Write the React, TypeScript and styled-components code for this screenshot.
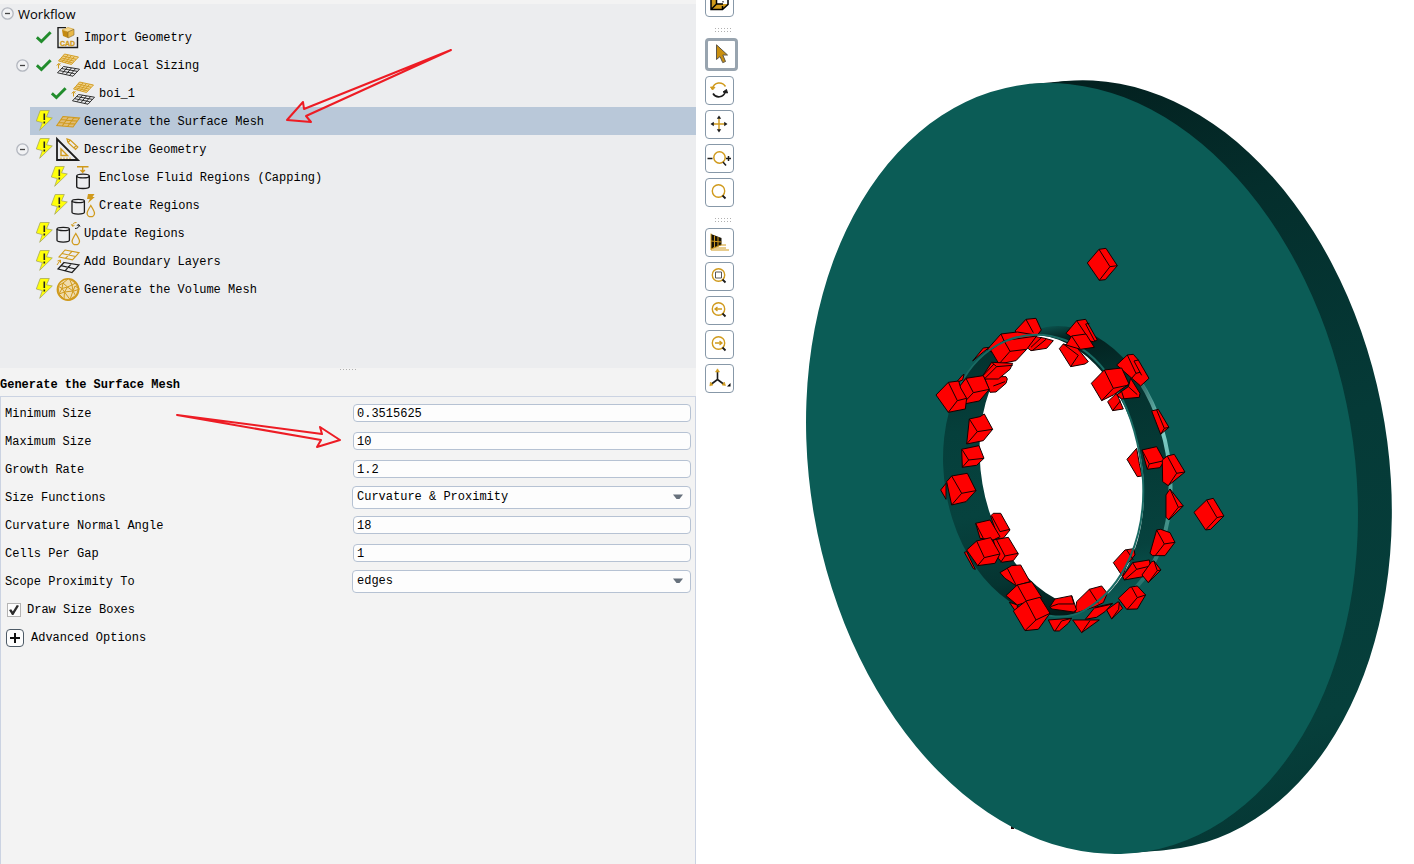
import React, { useState } from "react";
import styled, { createGlobalStyle, css } from "styled-components";

const GOLD = "#d09a1c";
const INK = "#1c1c1c";
const LINE = "#b6c2d3";
const MONO = '"Liberation Mono", "Noto Sans CJK SC", monospace';

const GlobalStyle = createGlobalStyle`
  *, *::before, *::after { box-sizing: border-box; }
  body { margin: 0; background: #fff; color: #000; font: 12px/26px ${MONO}; }
  svg { display: block; flex: none; }
`;

const Page = styled.main`
  display: grid;
  grid-template-columns: minmax(0, 696fr) minmax(0, 718fr);
  height: 100vh;
  overflow: hidden;
`;

const SidePane = styled.div`
  position: relative;
  display: flex;
  flex-direction: column;
  background: #f3f3f3;
  padding-top: 4px;
`;

const Tree = styled.nav`
  flex: none;
  background: #ecedef;
  padding-bottom: 65px;
`;

const TreeRoot = styled.div`
  display: flex;
  align-items: center;
  gap: 4px;
  padding-left: 1px;
  height: 19px;
  font: 13px/20px "Open Sans", sans-serif;
`;

const TreeList = styled.ul`
  list-style: none;
  margin: 0;
  padding: 0;
`;

const TreeRow = styled.li`
  display: flex;
  align-items: center;
  height: 28px;
`;

const ToggleCell = styled.div`
  flex: none;
  width: 30px;
  padding-left: 16px;
`;

const Toggle = styled.button`
  display: block;
  width: 13px;
  height: 13px;
  padding: 0;
  border: 0;
  background: none;
`;

const TreeItem = styled.a<{ $nested?: boolean; $active?: boolean }>`
  display: flex;
  flex: 1;
  align-items: center;
  gap: 4px;
  height: 28px;
  padding-top: 2px;
  padding-left: ${(p) => (p.$nested ? 21 : 6)}px;
  color: inherit;
  text-decoration: none;
  white-space: nowrap;
  background: ${(p) => (p.$active ? "#b9c8d9" : "transparent")};
`;

const Splitter = styled.div`
  display: flex;
  justify-content: center;
  height: 0;
`;

const PanelTitle = styled.h2`
  flex: none;
  margin: 0;
  padding-top: 4px;
  height: 28px;
  font: bold 12px/26px ${MONO};
`;

const Form = styled.form`
  flex: 1;
  border: 1px solid #cbd3e2;
  border-bottom: 0;
  padding: 2px 4px 0;
`;

const Field = styled.div`
  display: grid;
  grid-template-columns: minmax(0, 347fr) minmax(0, 339fr);
  align-items: center;
  height: 28px;
`;

const FieldLabel = styled.label`
  padding-top: 2px;
`;

const controlStyle = css`
  width: 100%;
  border: 1px solid ${LINE};
  border-radius: 4px;
  background: #fdfdfd;
  color: #000;
  font: 12px/16px ${MONO};
  outline: none;
`;

const InputCell = styled.div`
  padding-left: 1px;
`;

const TextInput = styled.input`
  ${controlStyle}
  display: block;
  height: 18px;
  padding: 1px 3px 0;
`;

const SelectCell = styled.div`
  position: relative;
`;

const Select = styled.select`
  ${controlStyle}
  display: block;
  appearance: none;
  height: 23px;
  padding: 0 4px;
`;

const SelectArrow = styled.svg`
  position: absolute;
  right: 8px;
  top: 8px;
  pointer-events: none;
`;

const CheckRow = styled.label`
  display: flex;
  align-items: center;
  gap: 6px;
  height: 28px;
  padding-top: 2px;
  padding-left: 2px;
`;

const Tick = styled.input`
  appearance: none;
  display: grid;
  place-items: center;
  width: 14px;
  height: 14px;
  margin: 0;
  border: 1px solid #b4b4b4;
  background: #fdfdfd;
  &:checked::after {
    content: "";
    width: 10px;
    height: 10px;
    background: #2d2d2d;
    clip-path: polygon(0 50%, 22% 42%, 38% 66%, 78% 0, 100% 8%, 44% 100%, 30% 100%);
  }
`;

const Advanced = styled.button`
  display: flex;
  align-items: center;
  gap: 7px;
  height: 28px;
  padding: 2px 0 0 1px;
  border: 0;
  background: none;
  color: #000;
  font: 12px/26px ${MONO};
`;

const Annotations = styled.svg`
  position: absolute;
  left: 0;
  top: 0;
  pointer-events: none;
`;

const ViewPane = styled.section`
  display: flex;
  min-width: 0;
  min-height: 0;
  background: #fff;
`;

const Toolbar = styled.div`
  display: flex;
  flex: none;
  flex-direction: column;
  gap: 5px;
  width: 48px;
  padding-left: 9px;
  margin-top: -12px;
`;

const ToolButton = styled.button<{ $active?: boolean }>`
  display: grid;
  flex: none;
  place-items: center;
  width: ${(p) => (p.$active ? 33 : 29)}px;
  height: ${(p) => (p.$active ? 33 : 29)}px;
  padding: 0;
  border: ${(p) => (p.$active ? "3px solid #98a4af" : "1px solid #8798a8")};
  border-radius: 4px;
  background: #fff;
`;

const Grip = styled.div`
  flex: none;
  height: 11px;
  padding: 6px 0 0 10px;
`;

const Scene = styled.svg`
  flex: 1;
  min-width: 0;
  width: 100%;
  height: 100%;
`;

function Dots({ rows }: { rows: number }) {
  return (
    <svg width="17" height={rows * 3} fill="#b0b0b0" aria-hidden="true">
      {Array.from({ length: rows * 6 }, (_, i) => (
        <rect key={i} x={(i % 6) * 3} y={Math.floor(i / 6) * 3 + (rows === 1 ? 1 : 0)} width="1" height="1" />
      ))}
    </svg>
  );
}

function Minus() {
  return (
    <svg width="13" height="13" fill="none" aria-hidden="true">
      <circle cx="6.5" cy="6.5" r="5.7" stroke="#b3b7bf" strokeWidth="1.3" fill="#f1f2f4" />
      <path d="M4 6.5h5" stroke="#444" strokeWidth="1.3" />
    </svg>
  );
}

function Status({ done }: { done?: boolean }) {
  return done ? (
    <svg width="16" height="20" fill="none" aria-hidden="true">
      <path d="M.8 9.3 5.4 13.500 14.6 4.3" stroke="#218c2c" strokeWidth="3" />
    </svg>
  ) : (
    <svg width="16" height="20" overflow="visible" aria-hidden="true">
      <path d="M4.200 -1.500H13.300L10.500 4.800 16.300 6 3.700 18.300 6.300 10.600.3 9Z" fill="#ffff0a" stroke="#a9a95a" strokeWidth=".8" />
      <path d="M8.300 1.500v6.500M8.300 9.500v2" stroke="#222" strokeWidth="1.6" />
    </svg>
  );
}

const icons: Record<string, React.ReactNode> = {
  cad: (
    <>
      <path d="M10 1.600H2V21.500H21.500V11" fill="none" stroke={INK} strokeWidth="1.4" />
      <path d="m6 4 6-2.500 6 1.800-6 2.700Z" fill="#f5d890" stroke={GOLD} strokeWidth=".6" />
      <path d="m6 4 6 2v6L7 10Z" fill="#c48a12" />
      <path d="m12 6 6-2.700V9l-6 3Z" fill="#e8b848" stroke="#7d6433" strokeWidth=".6" />
      <text x="4" y="19.500" fontFamily="Liberation Sans" fontSize="7" fontWeight="bold" fill={GOLD} stroke={GOLD} strokeWidth=".3">CAD</text>
    </>
  ),
  sizing: (
    <>
      <path d="m8.500 0 14 3-7 7.500L2.500 7ZM12 1 6 8M15 2 9 9M18.500 2.500 12 9.500M7 2l13 3.300M5 3.800l13 3.300M3.500 5.500l13 3.400" fill="#efd18b" stroke={GOLD} strokeWidth=".9" />
      <path d="m7.500 12.500 16 2.700-6.500 7L1.500 18.800ZM11.500 13.200 6 19.700M15.500 13.900 10 20.500M19.500 14.700 13.500 21.500M5.500 14.500l16 2.900M3.700 16.700l15 3" fill="none" stroke={INK} strokeWidth=".9" />
      <path d="M2.500 14.500v-4l2-1M.8 11.500l1.700-2 1.800 2" fill="none" stroke={GOLD} />
    </>
  ),
  surface: (
    <path d="M7 6.500 23.500 8 17 17 .8 15.500ZM12.500 7 6.200 16M18 7.500 11.600 16.500M5 9.500 21.500 11M3 12.500 19.500 14" fill="#e0bd78" stroke={GOLD} strokeWidth="1.1" />
  ),
  describe: (
    <>
      <path d="M1 1V22H22Z" fill="none" stroke={INK} strokeWidth="1.8" />
      <path d="M5 11V17.500h6.500Z" fill="none" stroke={GOLD} strokeWidth="1.400" />
      <path d="M5 19.500v1.500M8 19.500v1.500M11 19.500v1.500M14 19.500v1.500" stroke={GOLD} />
      <path d="m11 1 1 3.500 7.500 7 2.300-2.500-7.500-7ZM12 4.500l2.300-2.500M18 10l2-2.300" fill="none" stroke={GOLD} strokeWidth="1.200" />
    </>
  ),
  enclose: (
    <>
      <path d="M6 .7h11.500M11.700 .7v5.500M9.500 4l2.200 2.300 2.200-2.300" fill="none" stroke={GOLD} strokeWidth="1.4" />
      <path d="M5.700 10V20.500c0 1.200 2.800 2 6.300 2s6.300-.8 6.300-2V10" fill="none" stroke={INK} strokeWidth="1.4" />
      <ellipse cx="12" cy="10" rx="6.300" ry="1.900" fill="none" stroke={INK} strokeWidth="1.400" />
    </>
  ),
  create: (
    <>
      <path d="M1 7v11.300c0 1.100 2.800 1.800 6.200 1.800s6.200-.7 6.200-1.800V7" fill="none" stroke={INK} strokeWidth="1.3" />
      <ellipse cx="7.200" cy="7" rx="6.200" ry="1.700" fill="none" stroke={INK} strokeWidth="1.3" />
      <path d="m17 0h6.500l-2 3h2.300l-7 6.300 2-4.300H16Z" fill={GOLD} />
      <path d="M19.800 11.500c-2.500 4-3.700 6-3.700 7.700a3.700 3.500 0 0 0 7.400 0c0-1.700-1.200-3.700-3.700-7.700Z" fill="none" stroke={GOLD} strokeWidth="1.3" />
    </>
  ),
  update: (
    <>
      <path d="M1 7v11.300c0 1.100 2.800 1.800 6.200 1.800s6.200-.7 6.200-1.800V7" fill="none" stroke={INK} strokeWidth="1.3" />
      <ellipse cx="7.200" cy="7" rx="6.200" ry="1.700" fill="none" stroke={INK} strokeWidth="1.3" />
      <path d="M16.500 4C16.500 1.500 18 .5 20.500 .5M15.300 2.300l1.200 2 2-1" fill="none" stroke={GOLD} />
      <path d="M23 3C23 5.500 21.500 6.500 19 6.500M24 4.500l-1.200-2-2 1" fill="none" stroke={INK} />
      <path d="M19.800 11.500c-2.500 4-3.700 6-3.700 7.700a3.700 3.500 0 0 0 7.400 0c0-1.700-1.200-3.700-3.700-7.700Z" fill="none" stroke={GOLD} strokeWidth="1.3" />
    </>
  ),
  layers: (
    <>
      <path d="m9 0 14 2.700-6.500 7.200L3 7ZM16 1.400 9.500 8.400M6 3.500l13.500 3" fill="none" stroke={GOLD} strokeWidth="1.1" />
      <path d="m8 12.500 15 2.500-7 7.500L2 19ZM15.500 13.700 9 20.800M5 15.700l14.500 3.300" fill="none" stroke={INK} strokeWidth="1.2" />
      <path d="M1 15 4 10.500M1.500 11 4.500 10v3" fill="none" stroke={GOLD} />
    </>
  ),
  volume: (
    <>
      <circle cx="12" cy="11.500" r="10.700" fill="#f0dcae" stroke={GOLD} strokeWidth="1.400" />
      <path d="m12 1-5 4-5 3 1 8 5 5 6 1 6-4 2.500-7-3-6-6-4 2.500 6-4.500 2L7 5M8 21l.5-7L3 16 6 10.500l5.500-1.500 5.500 4-3 8.500 5.500-4-2.500-4.500 2-5 4.500 3-5.500 2M16 7l3.500-2M6 10.500 7 5M2 8l4 2.500M8.500 14l8.500-1M8.500 14 6 10.500M8.500 14l3-5M8.500 14l5.500 7.500M16 7l1 6" fill="none" stroke={GOLD} strokeWidth="1" />
    </>
  ),
};

type Step = { text: string; icon: string; done?: boolean; nested?: boolean; toggle?: boolean };

const steps: Step[] = [
  { text: "Import Geometry", icon: "cad", done: true },
  { text: "Add Local Sizing", icon: "sizing", done: true, toggle: true },
  { text: "boi_1", icon: "sizing", done: true, nested: true },
  { text: "Generate the Surface Mesh", icon: "surface" },
  { text: "Describe Geometry", icon: "describe", toggle: true },
  { text: "Enclose Fluid Regions (Capping)", icon: "enclose", nested: true },
  { text: "Create Regions", icon: "create", nested: true },
  { text: "Update Regions", icon: "update" },
  { text: "Add Boundary Layers", icon: "layers" },
  { text: "Generate the Volume Mesh", icon: "volume" },
];

type FieldSpec = { id: string; label: string; value: string; options?: string[] };

const fields: FieldSpec[] = [
  { id: "min", label: "Minimum Size", value: "0.3515625" },
  { id: "max", label: "Maximum Size", value: "10" },
  { id: "growth", label: "Growth Rate", value: "1.2" },
  { id: "functions", label: "Size Functions", value: "Curvature & Proximity", options: ["Curvature & Proximity"] },
  { id: "angle", label: "Curvature Normal Angle", value: "18" },
  { id: "cells", label: "Cells Per Gap", value: "1" },
  { id: "scope", label: "Scope Proximity To", value: "edges", options: ["edges"] },
];

const lens = (
  <>
    <circle cx="9.500" cy="9" r="6.200" fill="none" stroke={GOLD} strokeWidth="1.400" />
    <path d="m13.500 13.500 3 3" stroke={INK} strokeWidth="1.8" />
  </>
);

const tools: { name: string; active?: boolean; gripBefore?: boolean; art: React.ReactNode }[] = [
  {
    name: "Display body",
    art: (
      <>
        <path d="M2 17V6l6-4v9Z" fill={GOLD} />
        <path d="m2 17 5.500-5H19l-5 5Z" fill={GOLD} />
        <path d="M7.500 2H19v10H7.500Z" fill="#fff" />
        <path d="M2 5v12.500h11.500L19 12.500V2M7.500 2v10H14M2 17.500 7.500 12M13.500 17.500V14" fill="none" stroke="#000" strokeWidth="1.500" />
        <path d="M14 3v9" stroke="#000" strokeDasharray="1.500 1.500" />
      </>
    ),
  },
  {
    name: "Select",
    active: true,
    gripBefore: true,
    art: <path d="M5.500.8V15.500L9 12.500 11.700 18.600 14.500 17.500 11.800 11H16.500Z" fill="#c98f10" stroke="#5e574a" strokeWidth="1" />,
  },
  {
    name: "Rotate",
    art: (
      <>
        <path d="M3.500 8.500C5 2 13 1 16.500 6.500" fill="none" stroke={GOLD} strokeWidth="1.500" />
        <path d="m1.500 7 4.500.3L3.500 10Z" fill={GOLD} stroke={GOLD} />
        <path d="M16.500 11.500C14.500 18 7 18.500 4 13.500" fill="none" stroke={INK} strokeWidth="1.600" />
        <path d="m14 12 4.500 1-1-3.500Z" fill={INK} stroke={INK} />
      </>
    ),
  },
  {
    name: "Pan",
    art: (
      <>
        <path d="M10 4v12M4 10h12" stroke={GOLD} strokeWidth="1.400" />
        <path d="m10 1.500 2.200 3.300H7.800ZM10 18.500l2.200-3.300H7.800ZM1.500 10l3.300-2.200v4.400ZM18.500 10l-3.300-2.200v4.400Z" fill={INK} />
      </>
    ),
  },
  {
    name: "Zoom in and out",
    art: (
      <>
        <circle cx="10.500" cy="9.500" r="5.700" fill="none" stroke={GOLD} strokeWidth="1.500" />
        <path d="m14 14 3 3.500M-1.500 10.500h5M17 10.500h5M19.500 8v5" stroke={INK} strokeWidth="1.500" />
      </>
    ),
  },
  { name: "Zoom", art: lens },
  {
    name: "Perspective",
    gripBefore: true,
    art: (
      <>
        <path d="M2 2 12.500 6v7L2 17Z" fill="#171207" />
        <path d="M2 1.500V18h18M2 17 12 13h5M4 16h13M2 9l10.500 1M5.500 3.500v12.500M9 5v9.500" fill="none" stroke={GOLD} strokeWidth="1" />
      </>
    ),
  },
  { name: "Zoom to box", art: <>{lens}<path d="M6.500 6h6v6h-6Z" fill="none" stroke="#555" /></> },
  { name: "Previous view", art: <>{lens}<path d="M13 9H6M8.500 7 6 9l2.500 2" fill="none" stroke={GOLD} strokeWidth="1.300" /></> },
  { name: "Next view", art: <>{lens}<path d="M6 9h7M10.500 7 13 9l-2.500 2" fill="none" stroke={GOLD} strokeWidth="1.300" /></> },
  {
    name: "Axis orientation",
    art: (
      <>
        <path d="M8.500 3v8.500L2.500 16M8.500 11.500l6 4.500" fill="none" stroke={INK} strokeWidth="1.600" />
        <path d="m8.500 .8 2 3.200h-4ZM.8 17.800 1.500 14l2.500 3ZM16.500 17.500 13 17l2.300-3Z" fill={GOLD} stroke={GOLD} strokeWidth=".6" />
        <path d="M21.500 15v3.500H18Z" fill="#000" />
      </>
    ),
  },
];

/* Each size box is its outline followed by its visible inner edges. */
type Box = [string, string?];

const boxesBehind: Box[] = [
  ["255 303 288 268 318 265 334 300 320 318 270 320", "M288 268 310 308"],
  ["172 358 213 312 262 306 310 314 330 330 222 340 184 366", "M213 312 222 332"],
  ["128 393 160 354 178 352 160 366"],
  ["290 352 318 320 345 325 370 332 350 355 303 362", "M303 352 335 322M308 361 348 328"],
  ["182 360 222 332 320 318 290 358 258 392 207 402", "M222 332 240 364 290 358M240 364 207 402"],
  ["180 487 165 447 205 440 228 440 232 447 228 460 198 486", "M190 468 225 455"],
  ["158 438 185 397 248 400 240 418 205 447 165 447", "M185 397 200 410 248 406M200 410 165 445M192 402 160 436"],
  ["388 356 400 342 440 352 475 395 465 402 422 410", "M400 342 445 376 422 410"],
  ["591 688 620 655 628 700 636 738 622 740"],
  ["550 998 585 960 612 956 615 975 590 1005 578 1040", "M590 960 610 990"],
  ["440 1115 478 1078 515 1068 532 1090 520 1118 495 1130 460 1142 435 1150", "M478 1078 505 1120"],
  ["428 1170 508 1170 455 1208", "M480 1172 455 1208"],
  ["355 1170 425 1165 415 1180 388 1203 372 1203", "M395 1173 375 1203M395 1173 425 1165"],
  ["360 1130 375 1107 425 1097 440 1140 430 1146 365 1137", "M362 1130 385 1122 432 1122M425 1097 432 1122"],
  ["103 967 110 965 136 1018 130 1016"],
  ["32 780 48 760 48 808"],
  ["238 1117 262 1125 262 1152"],
];

const boxesFront: Box[] = [
  ["507 58 528 55 562 107 526 149 508 151 472 99", "M507 58 540 110 562 107M540 110 508 151"],
  ["78 458 98 435 102 433 98 450"],
  ["80 480 108 445 160 437 178 478 148 513 97 523", "M108 445 130 488 178 478M130 488 97 523"],
  ["18 495 55 457 86 453 92 474 110 505 106 537 55 547", "M55 457 82 512 110 505M82 512 55 547"],
  ["118 567 150 560 163 552 188 598 160 632 110 642", "M118 567 142 605 188 598M142 605 110 642"],
  ["95 658 147 647 162 685 140 706 97 712", "M97 660 116 690 162 685M116 690 97 712"],
  ["408 310 440 272 467 268 502 330 490 335 430 325", "M440 272 467 312M467 282 495 335M467 282 478 280"],
  ["408 345 425 318 468 312 493 352 452 358", "M425 318 450 356"],
  ["560 405 592 375 610 373 625 390 657 445 632 468 600 440", "M592 375 618 430 630 427M612 393 625 390M612 393 635 436M618 430 605 445"],
  ["533 515 560 490 580 537 548 542", "M572 512 548 542"],
  ["560 495 595 470 602 445 630 490 628 502 575 507", "M575 485 582 506M595 470 622 494"],
  ["484 460 523 420 575 414 597 462 550 495 515 512", "M523 420 550 475 597 465M550 475 515 512"],
  ["665 543 685 538 717 592 692 613", "M680 540 703 595 717 592M703 595 692 613"],
  ["636 660 680 650 703 692 690 713 652 718", "M636 660 658 702 703 692M658 702 652 718"],
  ["697 690 712 678 733 673 765 726 715 767 698 755", "M712 678 740 730 765 726M740 730 715 767"],
  ["708 795 720 777 760 828 717 870 708 862", "M720 777 745 832 760 828M745 832 717 868"],
  ["792 847 830 810 850 805 882 858 842 898 827 900", "M830 810 861 863 882 858M861 863 827 900"],
  ["680 900 692 898 720 908 735 937 705 977 668 977 660 970", "M680 900 703 942 735 937M703 942 675 978"],
  ["578 1040 608 998 658 990 662 1010 640 1040 583 1050", "M608 998 620 1018 662 1008M620 1018 583 1050"],
  ["636 1035 665 995 672 993 693 1020 655 1058", "M672 993 682 1022 693 1020M682 1022 655 1058"],
  ["565 1105 600 1072 622 1068 647 1095 622 1137 590 1138", "M605 1072 622 1103 647 1095M622 1103 592 1138"],
  ["530 1140 565 1115 578 1135 545 1167", "M568 1116 566 1138 545 1167"],
  ["466 1168 495 1132 548 1120 525 1145 500 1162", "M495 1134 548 1122"],
  ["182 858 190 850 212 850 240 900 220 925 205 925", "M185 858 210 905 240 898"],
  ["137 880 180 870 210 920 190 930 150 925", "M137 880 160 925"],
  ["190 930 235 922 265 972 250 992 215 997 205 985", "M200 930 225 978 265 970M225 978 212 997"],
  ["110 960 140 933 182 923 210 972 195 1000 143 1007", "M140 933 163 983 210 972M163 983 143 1007"],
  ["50 755 65 738 112 730 138 782 108 815 65 825", "M65 738 95 790 138 782M95 790 65 825"],
  ["210 1028 245 1007 272 1005 300 1055 258 1067 225 1045", "M232 1015 258 1065"],
  ["228 1097 262 1065 305 1055 335 1102 295 1115 262 1125", "M262 1065 288 1112"],
  ["250 1143 288 1113 330 1102 360 1150 325 1198 285 1202", "M288 1113 318 1170 360 1150M318 1170 285 1202"],
];

function Boxes({ items }: { items: Box[] }) {
  return (
    <g transform="translate(930 230) scale(.3333)" stroke="#140000" strokeWidth="3" strokeLinejoin="round">
      {items.map(([outline, edges], i) => (
        <g key={i}>
          <polygon points={outline} fill="#fe0000" />
          {edges && <path d={edges} fill="none" />}
        </g>
      ))}
    </g>
  );
}

/* Gradients of the bore are in the ellipses' own coordinates, centred on 0,0. */
function Model() {
  return (
    <Scene viewBox="744 0 670 864" preserveAspectRatio="xMidYMin meet" role="img" aria-label="Disc with size boxes">
      <defs>
        <linearGradient id="rim" gradientUnits="userSpaceOnUse" x1="1060" y1="80" x2="1300" y2="850">
          <stop offset="0" stopColor="#03201f" />
          <stop offset=".2" stopColor="#042e2c" />
          <stop offset=".5" stopColor="#053a37" />
          <stop offset=".85" stopColor="#063f3b" />
          <stop offset="1" stopColor="#053633" />
        </linearGradient>
        <linearGradient id="collar" gradientUnits="userSpaceOnUse" x1="0" y1="-145" x2="0" y2="143">
          <stop offset="0" stopColor="#0a4f4a" />
          <stop offset=".05" stopColor="#03211f" />
          <stop offset=".2" stopColor="#04302d" />
          <stop offset=".5" stopColor="#053a36" />
          <stop offset=".8" stopColor="#06423e" />
          <stop offset="1" stopColor="#0b5c56" />
        </linearGradient>
        <linearGradient id="wall" gradientUnits="userSpaceOnUse" x1="0" y1="-143" x2="0" y2="143">
          <stop offset="0" stopColor="#04302d" />
          <stop offset=".3" stopColor="#053f3b" />
          <stop offset=".6" stopColor="#06423e" />
          <stop offset=".85" stopColor="#053431" />
          <stop offset="1" stopColor="#021917" />
        </linearGradient>
        <linearGradient id="glint" gradientUnits="userSpaceOnUse" x1="0" y1="-105" x2="0" y2="130">
          <stop offset="0" stopColor="#7fd0c8" stopOpacity="0" />
          <stop offset=".35" stopColor="#7fd0c8" />
          <stop offset=".65" stopColor="#4a9c94" />
          <stop offset="1" stopColor="#5fb3ab" stopOpacity=".3" />
        </linearGradient>
        <clipPath id="bore">
          <ellipse rx="99" ry="142" transform="translate(1080 467) rotate(-9.7)" />
        </clipPath>
        <clipPath id="rightSide">
          <path d="M1125 360h60v240h-60Z" />
        </clipPath>
      </defs>
      <rect x="1011" y="826" width="3" height="3" fill="#200" />
      <g fill="url(#rim)">
        <path d="M1032 84 1066 81 1166 850 1132 853Z" />
        <path d="M1066 81 A272 388 -9.700 0 1 1166 850 A272 388 -9.700 0 1 1066 81Z" />
      </g>
      <ellipse rx="272" ry="388.300" transform="translate(1082 468.500) rotate(-9.700)" fill="#0b5c56" />
      <ellipse rx="99" ry="145" transform="translate(1071 470) rotate(-9.700)" fill="url(#collar)" />
      <ellipse rx="99" ry="142" transform="translate(1043.500 475.500) rotate(-9.700)" fill="url(#wall)" />
      <g clipPath="url(#rightSide)">
        <ellipse rx="98" ry="142" transform="translate(1071 470) rotate(-9.700)" fill="none" stroke="url(#glint)" strokeWidth="4" />
      </g>
      <g clipPath="url(#bore)">
        <ellipse rx="99" ry="142" transform="translate(1043.500 475.500) rotate(-9.700)" fill="#fff" />
      </g>
      <Boxes items={boxesBehind} />
      <path d="M959 387C981 343 1024 325 1065 340C1107 356 1137 410 1143 480C1146 535 1125 587 1085 610C1064 622 1038 616 1018 604" fill="none" stroke="#196b64" strokeWidth="2" />
      <Boxes items={boxesFront} />
    </Scene>
  );
}

export default function App() {
  const [drawBoxes, setDrawBoxes] = useState(true);
  return (
    <>
      <GlobalStyle />
      <Page>
        <SidePane>
          <Tree aria-label="Workflow">
            <TreeRoot>
              <Toggle aria-label="Collapse Workflow"><Minus /></Toggle>
              Workflow
            </TreeRoot>
            <TreeList>
              {steps.map((s) => (
                <TreeRow key={s.text}>
                  <ToggleCell>
                    {s.toggle && <Toggle aria-label={`Collapse ${s.text}`}><Minus /></Toggle>}
                  </ToggleCell>
                  <TreeItem href="#" $nested={s.nested} $active={s.icon === "surface"}>
                    <Status done={s.done} />
                    <svg width="24" height="24" viewBox="0 0 24 24" overflow="visible" aria-hidden="true">{icons[s.icon]}</svg>
                    {s.text}
                  </TreeItem>
                </TreeRow>
              ))}
            </TreeList>
          </Tree>
          <Splitter><Dots rows={1} /></Splitter>
          <PanelTitle>Generate the Surface Mesh</PanelTitle>
          <Form onSubmit={(e) => e.preventDefault()}>
            {fields.map((f) => (
              <Field key={f.id}>
                <FieldLabel htmlFor={f.id}>{f.label}</FieldLabel>
                {f.options ? (
                  <SelectCell>
                    <Select id={f.id} defaultValue={f.value}>
                      {f.options.map((o) => <option key={o}>{o}</option>)}
                    </Select>
                    <SelectArrow width="10" height="6" aria-hidden="true">
                      <path d="M0 .5h10L6.500 5h-3Z" fill="#67717c" />
                    </SelectArrow>
                  </SelectCell>
                ) : (
                  <InputCell><TextInput id={f.id} defaultValue={f.value} /></InputCell>
                )}
              </Field>
            ))}
            <CheckRow>
              <Tick type="checkbox" checked={drawBoxes} onChange={(e) => setDrawBoxes(e.target.checked)} />
              Draw Size Boxes
            </CheckRow>
            <Advanced type="button">
              <svg width="18" height="18" aria-hidden="true">
                <rect x=".5" y=".5" width="17" height="17" rx="3.500" fill="#fdfdfd" stroke="#4d5a66" />
                <path d="M4 9h10M9 4v10" stroke="#111" strokeWidth="2" />
              </svg>
              Advanced Options
            </Advanced>
          </Form>
          <Annotations width="460" height="460" fill="none" stroke="#ed1c24" strokeWidth="2" strokeLinejoin="round" aria-hidden="true">
            <path d="M451 50 304 109 303 102 287 120 311 122 306 116Z" />
            <path d="M177 415 322 434 320 427 340 440 317 447 321 440Z" />
          </Annotations>
        </SidePane>
        <ViewPane>
          <Toolbar role="toolbar" aria-label="View tools">
            {tools.map((t) => (
              <React.Fragment key={t.name}>
                {t.gripBefore && <Grip><Dots rows={2} /></Grip>}
                <ToolButton $active={t.active} aria-label={t.name} title={t.name}>
                  <svg width="20" height="20" viewBox="1 1 20 20" overflow="visible" aria-hidden="true">{t.art}</svg>
                </ToolButton>
              </React.Fragment>
            ))}
          </Toolbar>
          <Model />
        </ViewPane>
      </Page>
    </>
  );
}
